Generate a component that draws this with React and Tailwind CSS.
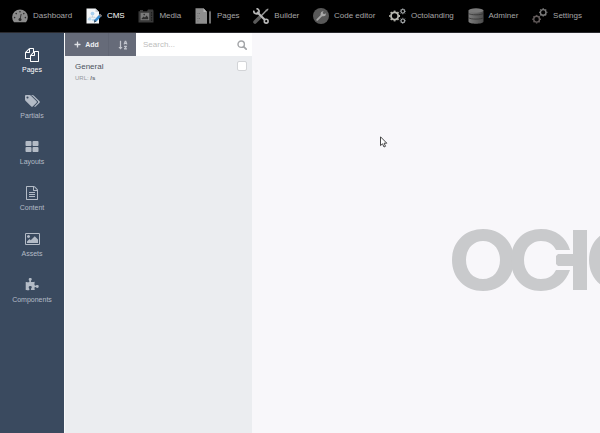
import React, { useState } from "react";
import { FaPlus, FaSortAlphaDown } from "react-icons/fa";

const DashboardIcon = () => (
  <svg viewBox="0 0 16 16" className="w-4 h-4">
    <path d="M2 14.2A7.8 7.8 0 1 1 14 14.2Z" fill="#8c8c8c" />
    <g fill="#2c2c2c">
      <circle cx="2.6" cy="9.6" r="0.8" />
      <circle cx="4.2" cy="5.6" r="0.8" />
      <circle cx="8" cy="3.8" r="0.8" />
      <circle cx="11.8" cy="5.6" r="0.8" />
      <circle cx="13.4" cy="9.6" r="0.8" />
      <circle cx="8" cy="11.4" r="1.5" />
    </g>
    <path d="M8 11.4L9.2 6" stroke="#2c2c2c" strokeWidth="0.9" />
  </svg>
);

const CmsIcon = () => (
  <svg viewBox="0 0 16 16" className="w-4 h-4">
    <path d="M0.5 0.5H9.5L13 4V15.5H0.5Z" fill="#f4f6f8" />
    <path d="M9.5 0.5V4H13Z" fill="#c9d0d6" />
    <circle cx="6.5" cy="5.6" r="1.9" fill="#a9d0ee" />
    <path d="M6.5 7.5V9.2M3.6 10.6V9.2H9V10" stroke="#b9c7d2" strokeWidth="0.7" fill="none" />
    <ellipse cx="3.6" cy="11.2" rx="1.8" ry="1.4" fill="#b9d9f0" />
    <ellipse cx="7.6" cy="12" rx="1.6" ry="1.2" fill="#b9d9f0" />
    <path d="M14 5.8L16 7.8L10.4 13.6L8 14.4L8.5 11.7Z" fill="#3c8ed0" />
    <path d="M14 5.8L16 7.8L14.8 9L12.8 7Z" fill="#8a7468" />
    <path d="M8.5 11.7L10.4 13.6L8 14.4Z" fill="#3a4a58" />
  </svg>
);

const MediaIcon = () => (
  <svg viewBox="0 0 16 16" className="w-4 h-4">
    <path d="M0.5 3.2H2V2H5V3.2H9L10 1.6H15L15.5 3V14.5H0.5Z" fill="#3a3a3a" />
    <rect x="2.6" y="4.8" width="8.6" height="7.4" fill="#7a7a7a" />
    <path d="M3.6 11.2V10.4L5.6 8.4L7 9.6L8.6 7.6L10.2 9.6V11.2Z" fill="#2c2c2c" />
    <circle cx="6.2" cy="6.6" r="0.8" fill="#2c2c2c" />
    <path d="M13.6 4V13" stroke="#1c1c1c" strokeWidth="1" strokeDasharray="1.5 1" />
  </svg>
);

const PagesIcon = () => (
  <svg viewBox="0 0 17 16" className="w-[17px] h-4">
    <path d="M0.5 0.2H8.5L12 4V15.8H0.5Z" fill="#8e8e8e" />
    <path d="M8.5 0.2V4H12Z" fill="#b5b5b5" />
    <path d="M2.4 5.5H5M2.4 8H4M2.4 10.5H5M2.4 13H4" stroke="#666" strokeWidth="0.8" strokeDasharray="1 0.6" />
    <path d="M14 4L15 2.6L16 4V15.6H14Z" fill="#707070" />
  </svg>
);

const BuilderIcon = () => (
  <svg viewBox="0 0 16 16" className="w-4 h-4" fill="none">
    <path d="M6.8 9.2L2 14" stroke="#5a5a5a" strokeWidth="3.6" strokeLinecap="round" />
    <path d="M7.6 8.4L13.6 2.2" stroke="#9c9c9c" strokeWidth="1.4" />
    <path d="M12.4 2L15 0.4L15.6 1L14 3.6Z" fill="#9c9c9c" />
    <path d="M4 4L12 12" stroke="#b8b8b8" strokeWidth="2.2" />
    <path d="M0.9 2.6A2.7 2.7 0 0 0 5.6 4.9A2.8 2.8 0 0 0 3.4 0.6" stroke="#b8b8b8" strokeWidth="1.7" />
    <circle cx="13.2" cy="13.2" r="1.9" stroke="#b8b8b8" strokeWidth="1.6" />
  </svg>
);

const CodeEditorIcon = () => (
  <svg viewBox="0 0 16 16" className="w-4 h-4">
    <circle cx="8" cy="8" r="8" fill="#585858" />
    <path d="M4.2 11.8L9.4 6.6" stroke="#a8a8a8" strokeWidth="1.8" strokeLinecap="round" />
    <path
      d="M12.7 5.2A2.6 2.6 0 1 1 10.6 3.2L9.6 5L11 6.3Z"
      fill="#a8a8a8"
    />
  </svg>
);

const GearShape = ({ cx, cy, r, width, color }) => (
  <g stroke={color} fill="none">
    <circle cx={cx} cy={cy} r={r} strokeWidth={width} />
    {[0, 45, 90, 135, 180, 225, 270, 315].map((angle) => (
      <path
        key={angle}
        d={`M${cx} ${cy - r - width / 3}V${cy - r - width}`}
        strokeWidth={r * 0.5}
        transform={`rotate(${angle} ${cx} ${cy})`}
      />
    ))}
  </g>
);

const OctolandingIcon = () => (
  <svg viewBox="0 0 17 16" className="w-[17px] h-4">
    <GearShape cx={5.6} cy={8} r={3.6} width={1.8} color="#b8b8b0" />
    <GearShape cx={13.8} cy={3.3} r={1.8} width={1.2} color="#a4a8aa" />
    <GearShape cx={13.8} cy={12.8} r={1.8} width={1.2} color="#a4a8aa" />
  </svg>
);

const AdminerIcon = () => (
  <svg viewBox="0 0 16 16" className="w-4 h-4">
    <defs>
      <linearGradient id="disk" x1="0" x2="1">
        <stop offset="0" stopColor="#7d7d7d" />
        <stop offset="1" stopColor="#4c4c4c" />
      </linearGradient>
    </defs>
    <path d="M0.5 2.4V13.6C0.5 16.6 15.5 16.6 15.5 13.6V2.4Z" fill="url(#disk)" />
    <ellipse cx="8" cy="2.5" rx="7.5" ry="2.2" fill="#7a7a7a" />
    <path
      d="M0.5 5.3C2 7.3 14 7.3 15.5 5.3M0.5 9.6C2 11.6 14 11.6 15.5 9.6"
      stroke="#2c2c2c"
      strokeWidth="0.7"
      fill="none"
    />
  </svg>
);

const SettingsIcon = () => (
  <svg viewBox="0 0 16 16" className="w-4 h-4">
    <GearShape cx={11.2} cy={4.4} r={2.8} width={1.4} color="#7c7c7c" />
    <GearShape cx={4.6} cy={11.2} r={2.9} width={1.4} color="#655d5d" />
  </svg>
);

const CopyIcon = () => (
  <svg viewBox="0 0 1792 1792" className="w-[14px] h-[14px] fill-current">
    <path d="M1696 384q40 0 68 28t28 68v1216q0 40-28 68t-68 28h-960q-40 0-68-28t-28-68v-288h-544q-40 0-68-28t-28-68v-672q0-40 20-88t48-76l408-408q28-28 76-48t88-20h416q40 0 68 28t28 68v328q68-40 128-40h416zm-544 213l-299 299h299v-299zm-640-384l-299 299h299v-299zm196 647l316-316v-416h-384v416q0 40-28 68t-68 28h-416v640h512v-256q0-40 20-88t48-76zm956 804v-1152h-384v416q0 40-28 68t-68 28h-416v640h896z" />
  </svg>
);

const TagsIcon = () => (
  <svg viewBox="0 0 1920 1792" className="w-[15px] h-[14px] fill-current">
    <path d="M448 448q0-53-37.500-90.500t-90.500-37.500-90.500 37.500-37.500 90.500 37.500 90.500 90.500 37.500 90.500-37.500 37.500-90.500zm1067 576q0 53-37 90l-491 492q-39 37-91 37-53 0-90-37l-715-716q-38-37-64.500-101t-26.500-117v-416q0-52 38-90t90-38h416q53 0 117 26.500t102 64.500l715 714q37 39 37 91zm384 0q0 53-37 90l-491 492q-39 37-91 37-36 0-59-14t-53-45l470-470q37-37 37-90 0-52-37-91l-715-714q-38-38-102-64.500t-117-26.500h224q53 0 117 26.500t102 64.500l715 714q37 39 37 91z" />
  </svg>
);

const LayoutsIcon = () => (
  <svg viewBox="0 0 1792 1792" className="w-[14px] h-[14px] fill-current">
    <path d="M832 1024v384q0 52-38 90t-90 38h-512q-52 0-90-38t-38-90v-384q0-52 38-90t90-38h512q52 0 90 38t38 90zm0-768v384q0 52-38 90t-90 38h-512q-52 0-90-38t-38-90v-384q0-52 38-90t90-38h512q52 0 90 38t38 90zm896 768v384q0 52-38 90t-90 38h-512q-52 0-90-38t-38-90v-384q0-52 38-90t90-38h512q52 0 90 38t38 90zm0-768v384q0 52-38 90t-90 38h-512q-52 0-90-38t-38-90v-384q0-52 38-90t90-38h512q52 0 90 38t38 90z" />
  </svg>
);

const ContentIcon = () => (
  <svg viewBox="0 0 1792 1792" className="w-[14px] h-[14px] fill-current">
    <path d="M1596 380q28 28 48 76t20 88v1152q0 40-28 68t-68 28h-1344q-40 0-68-28t-28-68v-1600q0-40 28-68t68-28h896q40 0 88 20t76 48zm-444-244v376h376q-10-29-22-41l-313-313q-12-12-41-22zm384 1528v-1024h-416q-40 0-68-28t-28-68v-416h-768v1536h1280zm-1024-864q0-14 9-23t23-9h704q14 0 23 9t9 23v64q0 14-9 23t-23 9h-704q-14 0-23-9t-9-23v-64zm736 224q14 0 23 9t9 23v64q0 14-9 23t-23 9h-704q-14 0-23-9t-9-23v-64q0-14 9-23t23-9h704zm0 256q14 0 23 9t9 23v64q0 14-9 23t-23 9h-704q-14 0-23-9t-9-23v-64q0-14 9-23t23-9h704z" />
  </svg>
);

const AssetsIcon = () => (
  <svg viewBox="-64 0 1920 1792" className="w-[15px] h-[14px] fill-current">
    <path d="M576 576q0 80-56 136t-136 56-136-56-56-136 56-136 136-56 136 56 56 136zm1024 384v448h-1408v-192l320-320 160 160 512-512zm96-704h-1600q-13 0-22.500 9.500t-9.500 22.500v1216q0 13 9.500 22.500t22.500 9.500h1600q13 0 22.500-9.500t9.500-22.500v-1216q0-13-9.500-22.500t-22.500-9.500zm160 32v1216q0 66-47 113t-113 47h-1600q-66 0-113-47t-47-113v-1216q0-66 47-113t113-47h1600q66 0 113 47t47 113z" />
  </svg>
);

const ComponentsIcon = () => (
  <svg viewBox="0 0 1792 1792" className="w-[14px] h-[14px] fill-current">
    <path d="M1755 1083q0 81-44.500 135t-123.500 54q-41 0-77.500-17.500t-59-38-56.500-38-71-17.500q-110 0-110 124 0 39 16 115t15 115v5q-22 0-33 1-34 3-97.500 11.500t-115.500 13.500-98 5q-61 0-103-26.500t-42-83.500q0-37 17.500-71t38-56.500 38-59 17.500-77.500q0-79-54-123.500t-135-44.500q-84 0-143 45.500t-59 127.500q0 43 15 83t33.500 64.500 33.500 53 15 50.500q0 45-46 89-37 35-117 35-95 0-245-24-9-2-27.500-4t-27.500-4l-13-2q-1 0-3-1-2 0-2-1v-1024q2 1 17.500 3.500t34 5 21.500 3.500q150 24 245 24 80 0 117-35 46-44 46-89 0-22-15-50.500t-33.500-53-33.500-64.500-15-83q0-82 59-127.500t144-45.500q80 0 134 44.500t54 123.500q0 41-17.500 77.500t-38 59-38 56.500-17.500 71q0 57 42 83.500t103 26.500q64 0 180-15t163-17v2q-1 2-3.500 17.500t-5 34-3.500 21.500q-24 150-24 245 0 80 35 117 44 46 89 46 22 0 50.500-15t53-33.500 64.500-33.500 83-15q82 0 127.500 59t45.500 143z" />
  </svg>
);

const NAV_ITEMS = [
  { title: "Dashboard", icon: DashboardIcon },
  { title: "CMS", icon: CmsIcon },
  { title: "Media", icon: MediaIcon },
  { title: "Pages", icon: PagesIcon },
  { title: "Builder", icon: BuilderIcon },
  { title: "Code editor", icon: CodeEditorIcon },
  { title: "Octolanding", icon: OctolandingIcon },
  { title: "Adminer", icon: AdminerIcon },
  { title: "Settings", icon: SettingsIcon },
];

const SIDE_ITEMS = [
  { title: "Pages", icon: CopyIcon },
  { title: "Partials", icon: TagsIcon },
  { title: "Layouts", icon: LayoutsIcon },
  { title: "Content", icon: ContentIcon },
  { title: "Assets", icon: AssetsIcon },
  { title: "Components", icon: ComponentsIcon },
];

const TopNav = () => (
  <nav className="flex justify-between items-center h-[33px] pl-3 pr-[18px] bg-black border-b border-[#2a2a2e]">
    {NAV_ITEMS.map(({ title, icon: Icon }) => (
      <a
        key={title}
        href="#"
        className={`flex items-center gap-[5px] text-[8px] leading-[10px] whitespace-nowrap ${
          title === "CMS" ? "text-white" : "text-[#a6a6a6]"
        }`}
      >
        <Icon />
        {title}
      </a>
    ))}
  </nav>
);

const SideNav = ({ active, onSelect }) => (
  <nav className="flex flex-col shrink-0 w-16 bg-[#3a4a5f]">
    {SIDE_ITEMS.map(({ title, icon: Icon }) => (
      <button
        key={title}
        type="button"
        onClick={() => onSelect(title)}
        className={`flex flex-col items-center gap-[3px] pt-[15px] pb-1 text-[7px] leading-[10px] ${
          active === title ? "text-white" : "text-[#b3bbc6]"
        }`}
      >
        <Icon />
        {title}
      </button>
    ))}
  </nav>
);

const PagesPanel = () => {
  const [search, setSearch] = useState("");
  const [checked, setChecked] = useState(false);

  return (
    <section className="shrink-0 w-[188px] bg-[#ebedf0] border-l border-[#f7f8f9]">
      <div className="flex h-[23px]">
        <div className="flex shrink-0 w-[71px] bg-[#666b79]">
          <button
            type="button"
            className="flex items-center justify-center gap-1 w-[44px] text-[7px] leading-[10px] font-bold text-[#f0f1f3] border-r border-[#606573]"
          >
            <FaPlus className="w-[7px] h-[7px] text-[#e0e2e6]" />
            Add
          </button>
          <button
            type="button"
            aria-label="Sort"
            className="flex flex-1 items-center justify-center text-[#c3c6ce]"
          >
            <FaSortAlphaDown className="w-[10px] h-[10px]" />
          </button>
        </div>
        <div className="flex flex-1 min-w-0 items-center bg-white pl-[7px] pr-[5px]">
          <input
            type="text"
            name="search"
            aria-label="Search"
            placeholder="Search..."
            value={search}
            onChange={(e) => setSearch(e.target.value)}
            className="flex-1 min-w-0 text-[8px] leading-[10px] text-[#555] placeholder-[#bdbdbd] outline-none"
          />
          <svg viewBox="0 0 10 10" className="w-[10px] h-[10px]" fill="none" stroke="#a3a5a8">
            <circle cx="4.2" cy="4.2" r="3.2" strokeWidth="1.4" />
            <path d="M6.6 6.6L9.2 9.2" strokeWidth="1.7" strokeLinecap="round" />
          </svg>
        </div>
      </div>
      <ul>
        <li className="flex justify-between pt-[5px] pl-[10px] pr-[5px]">
          <label htmlFor="page-general" className="flex flex-col">
            <span className="text-[8px] leading-3 text-[#4a525c]">General</span>
            <span className="text-[6px] leading-[10px] text-[#96999e]">
              URL: <b className="text-[#666b72]">/s</b>
            </span>
          </label>
          <input
            id="page-general"
            type="checkbox"
            checked={checked}
            onChange={(e) => setChecked(e.target.checked)}
            className="appearance-none w-[10px] h-[10px] rounded-[2px] bg-white border border-[#d2d4d7] checked:bg-[#3a4a5f]"
          />
        </li>
      </ul>
    </section>
  );
};

const Logo = () => (
  <svg viewBox="0 0 210 62" className="shrink-0 w-[210px] h-[62px]" fill="#c9cacc">
    <path
      fillRule="evenodd"
      d="M31 0C49 0 62 13 62 31S49 62 31 62S0 49 0 31S13 0 31 0ZM31 12C21 12 14 20 14 31S21 50 31 50S48 42 48 31S41 12 31 12Z"
    />
    <path d="M118 21C114 8 104 0 89 0C71 0 59 13 59 31S71 62 89 62C104 62 114 53 118 41H104C101 47 96 50 89 50C79 50 72 42 72 31S79 12 89 12C96 12 101 15 104 21Z" />
    <path d="M106 25H121V1H135V61H121V37H106L104 35V27Z" />
    <path
      fillRule="evenodd"
      d="M168 0C186 0 199 13 199 31S186 62 168 62S137 49 137 31S150 0 168 0ZM168 12C158 12 151 20 151 31S158 50 168 50S185 42 185 31S178 12 168 12Z"
    />
  </svg>
);

const App = () => {
  const [active, setActive] = useState("Pages");

  return (
    <div className="relative flex flex-col min-h-screen font-['Liberation_Sans',sans-serif]">
      <TopNav />
      <div className="flex flex-1">
        <SideNav active={active} onSelect={setActive} />
        <PagesPanel />
        <main className="flex flex-1 min-w-0 items-start overflow-hidden bg-[#f8f7fa] pt-[196px] pl-[200px]">
          <Logo />
        </main>
      </div>
      <svg viewBox="0 0 8 12" className="absolute left-[380px] top-[136px] w-2 h-3">
        <path
          d="M0.5 0.8V9.6L2.5 7.8L4 11L5.5 10.3L4.1 7.2H6.8Z"
          fill="#fff"
          stroke="#333"
          strokeWidth="0.9"
        />
      </svg>
    </div>
  );
};

export default App;
